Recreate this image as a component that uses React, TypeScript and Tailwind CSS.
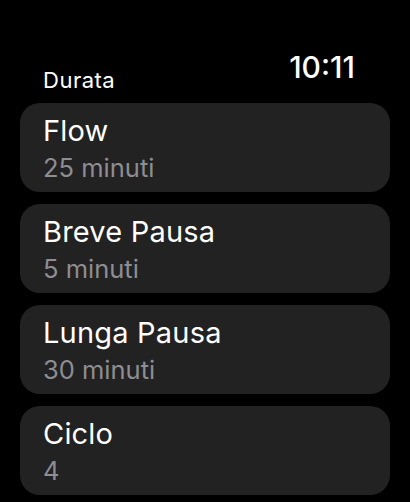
const items = [
  { title: 'Flow', value: '25 minuti' },
  { title: 'Breve Pausa', value: '5 minuti' },
  { title: 'Lunga Pausa', value: '30 minuti' },
  { title: 'Ciclo', value: '4' },
];

const App = () => {
  return (
    <div
      className="bg-black w-[410px] h-[502px] overflow-hidden text-white"
      style={{ fontFamily: 'Inter, "Noto Sans", sans-serif' }}
    >
      {/* Header */}
      <div className="flex justify-between items-start px-[43px] pt-[50px] h-[103px]">
        <div className="text-[22px] leading-[24px] tracking-[0.5px] mt-[18px]">Durata</div>
        <div className="text-[30px] leading-[34px] font-medium mr-[12px]">10:11</div>
      </div>

      {/* List */}
      <div className="flex flex-col gap-[12px] px-[20px]">
        {items.map((item) => (
          <div
            key={item.title}
            className="h-[89px] rounded-[20px] bg-[#222222] px-[23px] pt-[11px]"
          >
            <div className="text-[29px] leading-[34px] tracking-[0.2px]">{item.title}</div>
            <div className="text-[25.5px] leading-[30px] mt-[5px] text-[#8d8d93]">{item.value}</div>
          </div>
        ))}
      </div>
    </div>
  );
};

export default App;
